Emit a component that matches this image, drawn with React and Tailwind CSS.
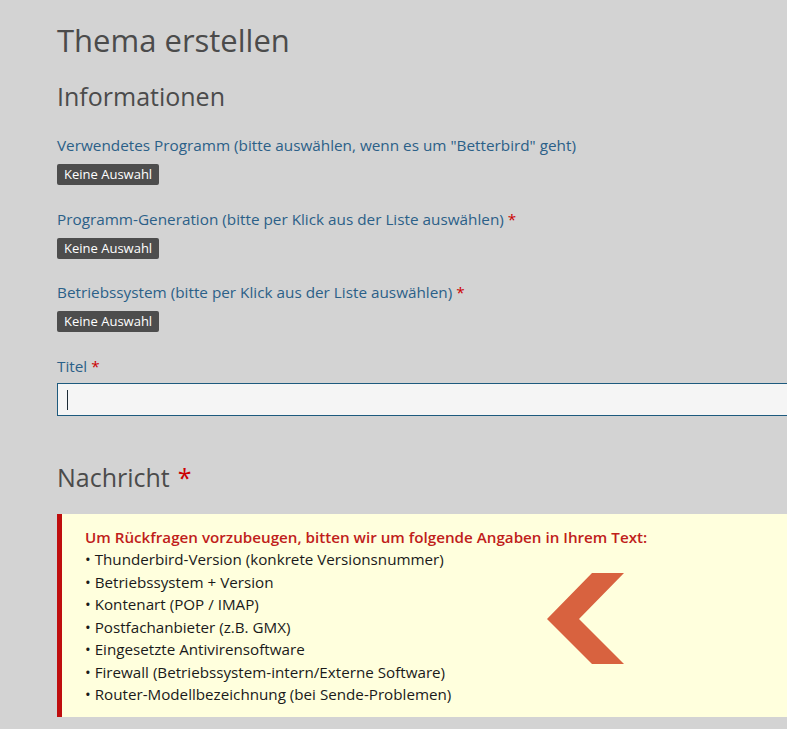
export default function App() {
  const font = { fontFamily: '"Open Sans", "Noto Sans", sans-serif' };
  const fields = [
    { label: 'Verwendetes Programm (bitte auswählen, wenn es um "Betterbird" geht)', req: false },
    { label: 'Programm-Generation (bitte per Klick aus der Liste auswählen)', req: true },
    { label: 'Betriebssystem (bitte per Klick aus der Liste auswählen)', req: true },
  ];
  const items = [
    'Thunderbird-Version (konkrete Versionsnummer)',
    'Betriebssystem + Version',
    'Kontenart (POP / IMAP)',
    'Postfachanbieter (z.B. GMX)',
    'Eingesetzte Antivirensoftware',
    'Firewall (Betriebssystem-intern/Externe Software)',
    'Router-Modellbezeichnung (bei Sende-Problemen)',
  ];
  return (
    <div className="min-h-[729px] w-full overflow-hidden bg-[#d3d3d3] pl-[57px]" style={font}>
      <h1 className="pt-[20px] text-[31px] leading-[40px] text-[#4b4b4b]">Thema erstellen</h1>
      <h2 className="mt-[19px] text-[25px] leading-[34px] text-[#4b4b4b]">Informationen</h2>

      <div className="mt-[20px] flex flex-col gap-[21.5px]">
        {fields.map((f) => (
          <div key={f.label} className="flex flex-col">
            <div className="text-[15.3px] leading-[24px] text-[#2b6088]">
              {f.label}
              {f.req && <span className="ml-[4px] text-[#c00]">*</span>}
            </div>
            <div className="mt-[7px] flex">
              <span className="rounded-[2px] bg-[#4d4d4d] px-[7px] text-[13px] leading-[21px] text-white">
                Keine Auswahl
              </span>
            </div>
          </div>
        ))}
      </div>

      <div className="mt-[22px] text-[15.3px] leading-[24px] text-[#2b6088]">
        Titel<span className="ml-[4px] text-[#c00]">*</span>
      </div>
      <div className="mt-[5px] flex h-[33px] w-[760px] items-center border border-[#1d5a7e] bg-[#f5f5f5] pl-[9px]">
        <div className="h-[20px] w-[1px] bg-[#1c2a35]" />
      </div>

      <h2 className="mt-[44px] text-[25px] leading-[34px] text-[#4b4b4b]">
        Nachricht<span className="ml-[8px] text-[#c00]">*</span>
      </h2>

      <div className="mt-[20px] flex w-[760px] border-l-[5px] border-[#bf0d0d] bg-[#ffffdd] pb-[11px] pl-[23px] pt-[12px]">
        <div className="flex flex-col">
          <div className="text-[15.2px] font-semibold leading-[22px] text-[#c0201a]">
            Um Rückfragen vorzubeugen, bitten wir um folgende Angaben in Ihrem Text:
          </div>
          {items.map((t) => (
            <div key={t} className="text-[15.2px] leading-[22.5px] text-[#1a1a1a]">
              • {t}
            </div>
          ))}
        </div>
      </div>

      <svg
        className="absolute left-[547px] top-[573px]"
        width="77"
        height="91"
        viewBox="0 0 77 91"
      >
        <polygon points="45,0 77,0 32,46 77,91 45,91 0,46" fill="#d8623f" />
      </svg>
    </div>
  );
}
